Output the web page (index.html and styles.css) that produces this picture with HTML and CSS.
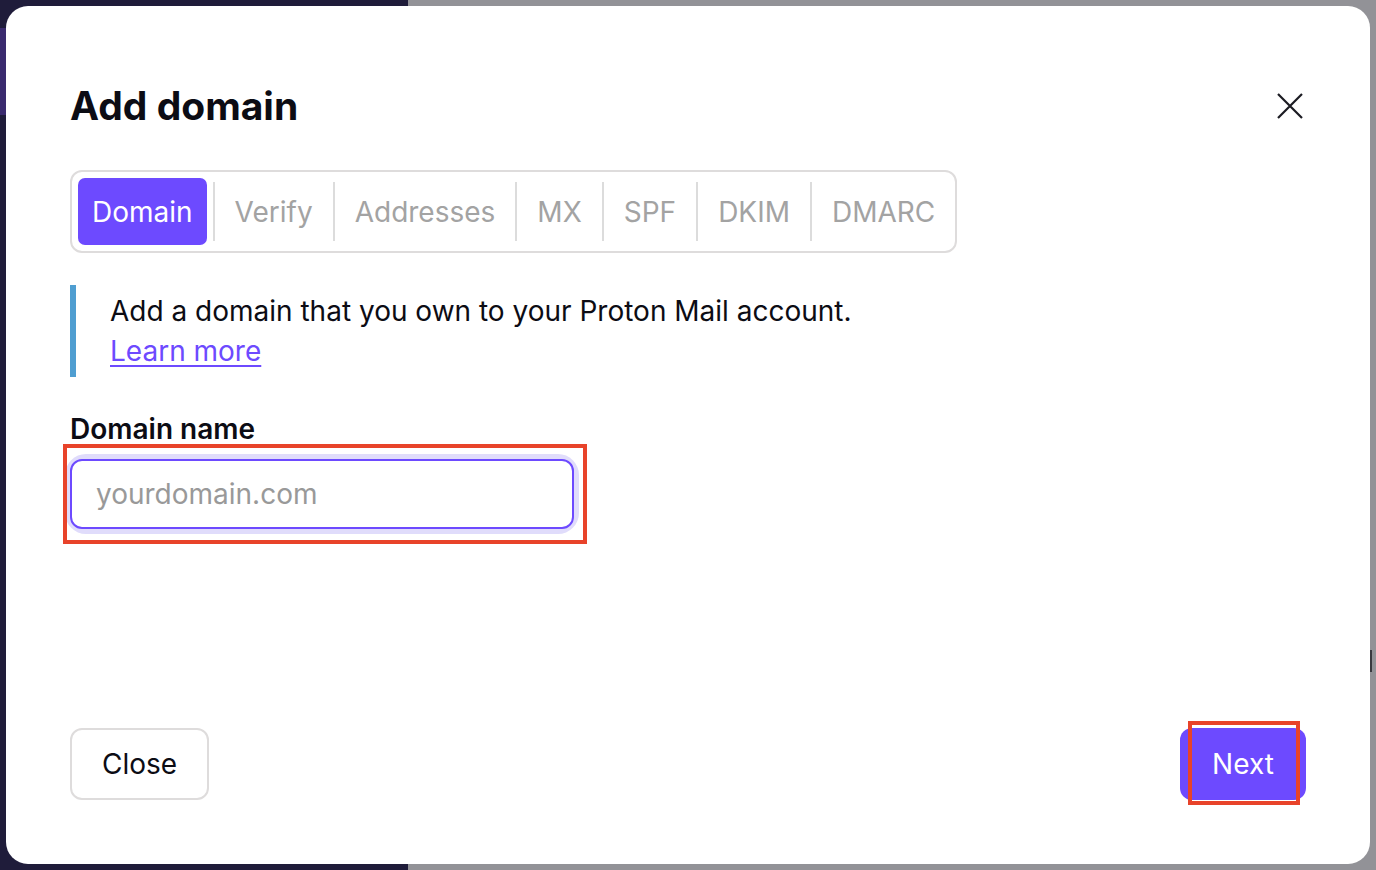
FILE: index.html
```html
<!DOCTYPE html>
<html lang="en">
<head>
<meta charset="utf-8">
<title>Add domain</title>
<link rel="stylesheet" href="styles.css">
</head>
<body>
<div class="backdrop">
  <div class="modal" role="dialog">
    <div class="modal-header">
      <h1 class="title">Add domain</h1>
      <button class="icon-close" aria-label="Close">
        <svg width="26" height="26" viewBox="0 0 26 26"><path d="M1 1 L25 25 M25 1 L1 25" stroke="#1b1b22" stroke-width="2.2" fill="none"/></svg>
      </button>
    </div>
    <div class="steps">
      <div class="step active">Domain</div>
      <div class="sep"></div>
      <div class="step">Verify</div>
      <div class="sep"></div>
      <div class="step">Addresses</div>
      <div class="sep"></div>
      <div class="step">MX</div>
      <div class="sep"></div>
      <div class="step">SPF</div>
      <div class="sep"></div>
      <div class="step">DKIM</div>
      <div class="sep"></div>
      <div class="step">DMARC</div>
    </div>
    <div class="info">
      <p class="info-text">Add a domain that you own to your Proton Mail account.</p>
      <a class="link" href="#">Learn more</a>
    </div>
    <label class="label" for="domain">Domain name</label>
    <div class="annot-input">
      <div class="field">
        <input id="domain" class="input" type="text" placeholder="yourdomain.com">
      </div>
    </div>
    <div class="footer">
      <button class="btn btn-outline">Close</button>
      <div class="next-wrap">
        <button class="btn btn-primary">Next</button>
        <div class="annot-next"></div>
      </div>
    </div>
  </div>
  <div class="scroll-thumb"></div>
</div>
</body>
</html>
```
FILE: styles.css
```css
* { box-sizing: border-box; }
html, body { margin: 0; height: 100%; }
body {
  font-family: Inter, "Noto Sans", sans-serif;
  color: #0c0c14;
  background:
    linear-gradient(#3a2a6e, #3a2a6e) 0 28px / 6px 87px no-repeat,
    linear-gradient(to right, #1f1c3a 0 408px, #929297 408px);
  overflow: hidden;
}
.backdrop {
  position: relative;
  height: 100%;
  padding: 6px;
  display: flex;
}
.modal {
  flex: 1;
  background: #fff;
  border-radius: 22px;
  padding: 76px 64px 64px;
  display: flex;
  flex-direction: column;
}
.modal-header {
  display: flex;
  justify-content: space-between;
  align-items: center;
}
.title {
  margin: 0;
  font-size: 39px;
  font-weight: 700;
  line-height: 48px;
}
.icon-close {
  border: 0;
  background: none;
  padding: 0;
  margin-right: 3px;
  width: 26px;
  height: 26px;
  display: flex;
}
.steps {
  margin-top: 40px;
  align-self: flex-start;
  display: flex;
  align-items: center;
  border: 2px solid #dedcdc;
  border-radius: 12px;
  padding: 6px 0 6px 6px;
  height: 83px;
}
.step {
  font-size: 28px;
  color: #a3a3a3;
  padding: 0 20px;
  height: 67px;
  display: flex;
  align-items: center;
}
.step.active {
  background: #6d4aff;
  color: #fff;
  border-radius: 7px;
  padding: 0 14px;
  margin-right: 6px;
}
.sep {
  width: 2px;
  height: 59px;
  background: #dcdcdc;
}
.info {
  margin-top: 32px;
  border-left: 6px solid #4f9ed1;
  padding: 6px 0 6px 34px;
}
.info-text {
  margin: 0;
  font-size: 28px;
  line-height: 40px;
}
.link {
  font-size: 28px;
  line-height: 40px;
  color: #6d4aff;
  text-decoration: underline;
  text-underline-offset: 4px;
}
.label {
  margin-top: 36px;
  font-size: 28px;
  font-weight: 600;
  line-height: 32px;
}
.annot-input {
  position: relative;
  align-self: flex-start;
  margin-top: 14px;
}
.annot-input::after {
  content: "";
  position: absolute;
  left: -7px;
  top: -15px;
  right: -13px;
  bottom: -15px;
  border: 4px solid #e8432a;
  pointer-events: none;
}
.field {
  border-radius: 16px;
  box-shadow: 0 0 0 5px #e0dcfb;
}
.input {
  display: block;
  width: 504px;
  height: 70px;
  border: 2px solid #6d4aff;
  border-radius: 12px;
  padding: 0 24px;
  font-family: inherit;
  font-size: 28px;
  color: #0c0c14;
  outline: none;
}
.input::placeholder { color: #999; }
.footer {
  margin-top: auto;
  display: flex;
  justify-content: space-between;
  align-items: center;
}
.btn {
  font-family: inherit;
  font-size: 28px;
  height: 72px;
  border-radius: 12px;
  padding: 0 30px;
}
.btn-outline {
  background: #fff;
  border: 2px solid #dedcdc;
  color: #0c0c14;
}
.btn-primary {
  background: #6d4aff;
  border: 0;
  color: #fff;
  width: 126px;
  padding: 0;
}
.next-wrap { position: relative; }
.annot-next {
  position: absolute;
  left: 8px;
  top: -7px;
  width: 112px;
  height: 84px;
  border: 4px solid #e8432a;
}
.scroll-thumb {
  position: absolute;
  right: 4px;
  top: 650px;
  width: 2px;
  height: 22px;
  background: #3a3a40;
}
```
